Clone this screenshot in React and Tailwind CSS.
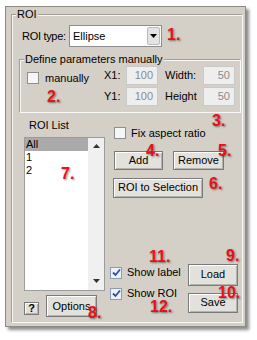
import React from "react";

const font = { fontFamily: '"Liberation Sans", Arial, sans-serif' };

function Btn({ className = "", children }) {
  return (
    <div
      className={
        "flex items-center justify-center border border-[#7a7a7a] bg-[#e3e1dc] text-[11px] leading-[13px] text-black shadow-[inset_1px_1px_0_#ffffff,inset_-1px_-1px_0_#b5b3ae] " +
        className
      }
    >
      {children}
    </div>
  );
}

function Check({ checked, className = "" }) {
  return (
    <div
      className={
        "flex h-[12px] w-[12px] shrink-0 items-center justify-center border " +
        (checked ? "border-[#8a9bb8] bg-[#eef1f8]" : "border-[#8f8f8f] bg-[#f6f6f6]") +
        " " +
        className
      }
    >
      {checked && (
        <svg width="9" height="9" viewBox="0 0 9 9">
          <path d="M1 4.5 L3.5 7 L8 1.5" fill="none" stroke="#2a4fa8" strokeWidth="1.8" />
        </svg>
      )}
    </div>
  );
}

function Num({ children, className = "" }) {
  return (
    <span
      className={
        "absolute text-[16px] font-bold leading-none text-[#e8101a] [text-shadow:1px_1px_2px_rgba(0,0,0,0.45)] " +
        className
      }
    >
      {children}
    </span>
  );
}

function Field({ value }) {
  return (
    <div className="flex h-[19px] w-[32px] items-center justify-end border border-[#c9c9c9] bg-[#eeeeee] pr-[4px] text-[11px] text-[#8a8a8a]">
      {value}
    </div>
  );
}

export default function App() {
  return (
    <div className="relative h-[340px] w-[257px] bg-white pl-[5px] pt-[6px]" style={font}>
      <div className="h-[321px] w-[241px] border border-[#8d8a84] bg-[#d4d0c8] pl-[6px] pt-[8px] shadow-[3px_3px_3px_rgba(0,0,0,0.45)]">
        {/* outer group */}
        <div className="relative h-[308px] w-[231px] border border-[#f8f8f6] shadow-[-1px_-1px_0_#a19e97]">
          <span className="absolute left-[3px] top-[-8px] bg-[#d4d0c8] px-[1px] text-[11px] leading-[13px] text-black">
            ROI
          </span>
          {/* ROI type row */}
          <div className="mt-[9px] flex items-center pl-[9px]">
            <span className="w-[47px] text-[11px] tracking-[-0.3px] text-black">ROI type:</span>
            <div className="flex h-[22px] w-[93px] items-center border border-[#8e8e8e] bg-white pl-[3px] text-[11px] text-black">
              <span className="flex-1">Ellipse</span>
              <div className="mr-[1px] flex h-[18px] w-[13px] items-center justify-center rounded-[2px] border border-[#b9b9b9] bg-[#e4e4e4]">
                <svg width="7" height="4" viewBox="0 0 7 4">
                  <path d="M0 0 L7 0 L3.5 4 Z" fill="#000" />
                </svg>
              </div>
            </div>
          </div>
          {/* inner group */}
          <div className="relative ml-[7px] mt-[13px] h-[53px] w-[221px] border border-[#f8f8f6] shadow-[-1px_-1px_0_#a19e97]">
            <span className="absolute left-[3px] top-[-8px] bg-[#d4d0c8] px-[1px] text-[11px] leading-[13px] text-black">
              Define parameters manually
            </span>
            <div className="flex pt-[5px]">
              <div className="flex w-[83px] items-start pl-[6px] pt-[6px]">
                <Check />
                <span className="ml-[6px] text-[11px] leading-[12px] text-black">manually</span>
              </div>
              <div className="grid grid-cols-[22px_32px_45px_32px] gap-y-[2px] text-[11px] text-black">
                <span className="flex items-center">X1:</span>
                <Field value="100" />
                <span className="flex items-center pl-[7px]">Width:</span>
                <Field value="50" />
                <span className="flex items-center">Y1:</span>
                <Field value="100" />
                <span className="flex items-center pl-[7px]">Height</span>
                <Field value="50" />
              </div>
            </div>
          </div>
          {/* bottom area */}
          <div className="flex">
            <div className="flex w-[96px] flex-col pl-[11px]">
              <span className="mt-[6px] pl-[5px] text-[11px] leading-[13px] text-black">ROI List</span>
              <div className="mt-[5px] flex h-[154px] w-[81px] border border-[#9c9c9c] bg-white">
                <div className="flex flex-1 flex-col text-[11px] leading-[13px] text-black">
                  <span className="bg-[#aaaaaa] pl-[1px]">All</span>
                  <span className="pl-[1px]">1</span>
                  <span className="pl-[1px]">2</span>
                </div>
                <div className="flex w-[16px] flex-col items-center justify-between bg-[#f0f0f0] pb-[7px] pt-[6px]">
                  <svg width="7" height="4" viewBox="0 0 7 4">
                    <path d="M0 4 L7 4 L3.5 0 Z" fill="#333" />
                  </svg>
                  <svg width="7" height="4" viewBox="0 0 7 4">
                    <path d="M0 0 L7 0 L3.5 4 Z" fill="#333" />
                  </svg>
                </div>
              </div>
              <div className="mt-[4px] flex items-start">
                <Btn className="mt-[7px] h-[13px] w-[15px] font-bold">?</Btn>
                <Btn className="ml-[7px] h-[22px] w-[51px]">Options</Btn>
              </div>
            </div>
            <div className="flex flex-1 flex-col pl-[5px]">
              <div className="mt-[12px] flex items-center">
                <Check />
                <span className="ml-[5px] text-[11px] text-black">Fix aspect ratio</span>
              </div>
              <div className="mt-[9px] flex">
                <Btn className="h-[19px] w-[49px]">Add</Btn>
                <Btn className="ml-[10px] h-[19px] w-[51px]">Remove</Btn>
              </div>
              <Btn className="-ml-[1px] mt-[8px] h-[20px] w-[90px]">ROI to Selection</Btn>
              <div className="mt-[66px] flex items-start">
                <Check checked className="-ml-[4px] mt-[3px]" />
                <span className="ml-[5px] mt-[2px] w-[61px] text-[11px] leading-[13px] text-black">Show label</span>
                <Btn className="h-[22px] w-[50px]">Load</Btn>
              </div>
              <div className="mt-[7px] flex items-start">
                <Check checked className="-ml-[4px] mt-[-5px]" />
                <span className="ml-[5px] mt-[-6px] w-[61px] text-[11px] leading-[13px] text-black">Show ROI</span>
                <Btn className="h-[20px] w-[50px]">Save</Btn>
              </div>
            </div>
          </div>
        </div>
      </div>
      <Num className="left-[167px] top-[27px]">1.</Num>
      <Num className="left-[47px] top-[89px]">2.</Num>
      <Num className="left-[212px] top-[113px]">3.</Num>
      <Num className="left-[146px] top-[143px]">4.</Num>
      <Num className="left-[218px] top-[143px]">5.</Num>
      <Num className="left-[209px] top-[176px]">6.</Num>
      <Num className="left-[61px] top-[166px]">7.</Num>
      <Num className="left-[88px] top-[305px]">8.</Num>
      <Num className="left-[226px] top-[248px]">9.</Num>
      <Num className="left-[218px] top-[285px]">10.</Num>
      <Num className="left-[149px] top-[249px]">11.</Num>
      <Num className="left-[150px] top-[299px]">12.</Num>
    </div>
  );
}
